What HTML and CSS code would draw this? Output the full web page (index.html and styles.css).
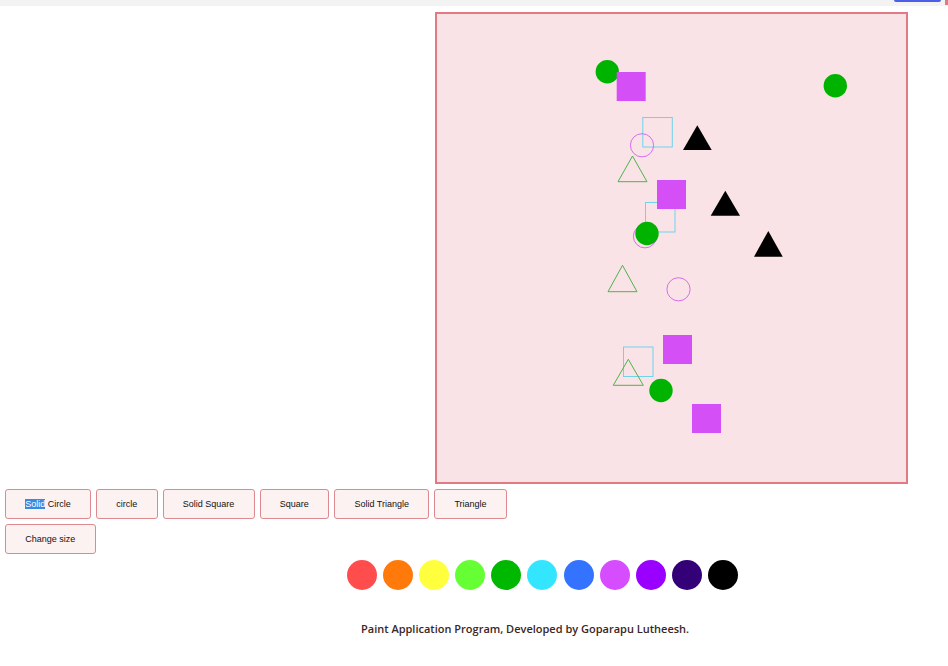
FILE: index.html
```html
<!DOCTYPE html>
<html>
<head>
<meta charset="utf-8">
<link rel="stylesheet" href="styles.css">
</head>
<body>
<div class="topbar"><span class="topbtn"></span><span class="topred"></span></div>
<div class="stage">
  <div class="board">
    <svg class="drawing" width="468" height="468" viewBox="0 0 468 468">
      <circle cx="170.3" cy="57.7" r="11.7" class="g-fill"/>
      <rect x="179.7" y="58" width="29" height="29" class="m-fill"/>
      <circle cx="398.3" cy="71.7" r="11.7" class="g-fill"/>
      <rect x="205.8" y="103.5" width="29.5" height="29.5" class="c-line"/>
      <circle cx="205" cy="131.3" r="11.6" class="m-line"/>
      <polygon points="260.3,111.3 274.7,136 246,136" class="k-fill"/>
      <polygon points="195.5,142 210,167.7 181,167.7" class="g-line"/>
      <rect x="208.5" y="188.5" width="29.5" height="29.5" class="c-line"/>
      <rect x="220" y="166" width="29" height="29" class="m-fill"/>
      <polygon points="288.3,176.7 303,201.7 273.7,201.7" class="k-fill"/>
      <circle cx="208" cy="222.3" r="11.6" class="m-line"/>
      <circle cx="210" cy="219.5" r="11.7" class="g-fill"/>
      <polygon points="331.3,217 345.7,242.7 317,242.7" class="k-fill"/>
      <polygon points="185.5,251.3 200,277.7 171,277.7" class="g-line"/>
      <circle cx="241.5" cy="275.3" r="11.6" class="m-line"/>
      <rect x="226" y="321" width="29" height="29" class="m-fill"/>
      <rect x="186.5" y="333" width="29.5" height="29.5" class="c-line"/>
      <polygon points="191.3,345.3 206.3,371.3 176.3,371.3" class="g-line"/>
      <circle cx="224" cy="376.5" r="11.7" class="g-fill"/>
      <rect x="255" y="390" width="29" height="29" class="m-fill"/>
    </svg>
  </div>
</div>
<div class="tools">
  <div class="tool-row">
    <button class="tool"><span class="sel">Solid</span> Circle</button>
    <button class="tool">circle</button>
    <button class="tool">Solid Square</button>
    <button class="tool">Square</button>
    <button class="tool">Solid Triangle</button>
    <button class="tool">Triangle</button>
  </div>
  <div class="tool-row">
    <button class="tool">Change size</button>
  </div>
</div>
<div class="palette">
  <span class="swatch red"></span>
  <span class="swatch orange"></span>
  <span class="swatch yellow"></span>
  <span class="swatch lime"></span>
  <span class="swatch green"></span>
  <span class="swatch cyan"></span>
  <span class="swatch blue"></span>
  <span class="swatch magenta"></span>
  <span class="swatch violet"></span>
  <span class="swatch indigo"></span>
  <span class="swatch black"></span>
</div>
<p class="footer">Paint Application Program, Developed by Goparapu Lutheesh.</p>
</body>
</html>
```

FILE: styles.css
```css
html, body {
  margin: 0;
  padding: 0;
  background: #ffffff;
  font-family: "Liberation Sans", Arial, sans-serif;
}

.topbar {
  position: relative;
  height: 6px;
  background: #f3f3f3;
}

.topbtn {
  position: absolute;
  left: 894px;
  top: 0;
  width: 47px;
  height: 2px;
  background: #4d5fe6;
  border-radius: 0 0 3px 3px;
}

.topred {
  position: absolute;
  left: 945px;
  top: 0;
  width: 3px;
  height: 5px;
  background: #e07a82;
}

.stage {
  display: flex;
  padding-left: 435px;
  margin-top: 6px;
}

.board {
  width: 469px;
  height: 468px;
  border: 2px solid #e07b83;
  background: #fae3e6;
}

.drawing {
  display: block;
}

.g-fill { fill: #00b300; }
.m-fill { fill: #d54ff7; }
.k-fill { fill: #000000; }
.c-line { fill: none; stroke: #6fd3ec; stroke-width: 1; }
.m-line { fill: none; stroke: #d56cf0; stroke-width: 1; }
.g-line { fill: none; stroke: #4cb34c; stroke-width: 1; }

.tools {
  display: flex;
  flex-direction: column;
  gap: 5px;
  padding-left: 5px;
  margin-top: 5px;
}

.tool-row {
  display: flex;
  gap: 5px;
}

.tool {
  height: 30px;
  padding: 0 19.25px;
  border: 1px solid #dc8a90;
  border-radius: 3px;
  background: #fdf2f2;
  font-family: "Liberation Sans", Arial, sans-serif;
  font-size: 9px;
  color: #111111;
}

.sel {
  background: #3a88e0;
  color: #ffffff;
}

.palette {
  display: flex;
  gap: 6.1px;
  padding-left: 347px;
  margin-top: 6px;
}

.swatch {
  width: 30px;
  height: 30px;
  border-radius: 50%;
}

.red { background: #ff4d4d; }
.orange { background: #ff7a0a; }
.yellow { background: #ffff3d; }
.lime { background: #66ff33; }
.green { background: #00b800; }
.cyan { background: #33e5ff; }
.blue { background: #3373ff; }
.magenta { background: #d64dff; }
.violet { background: #9900ff; }
.indigo { background: #330077; }
.black { background: #000000; }

.footer {
  margin: 31px 0 0 361px;
  font-family: "Open Sans", "DejaVu Sans", sans-serif;
  font-weight: 600;
  font-size: 11px;
  color: #3a2626;
}
```
